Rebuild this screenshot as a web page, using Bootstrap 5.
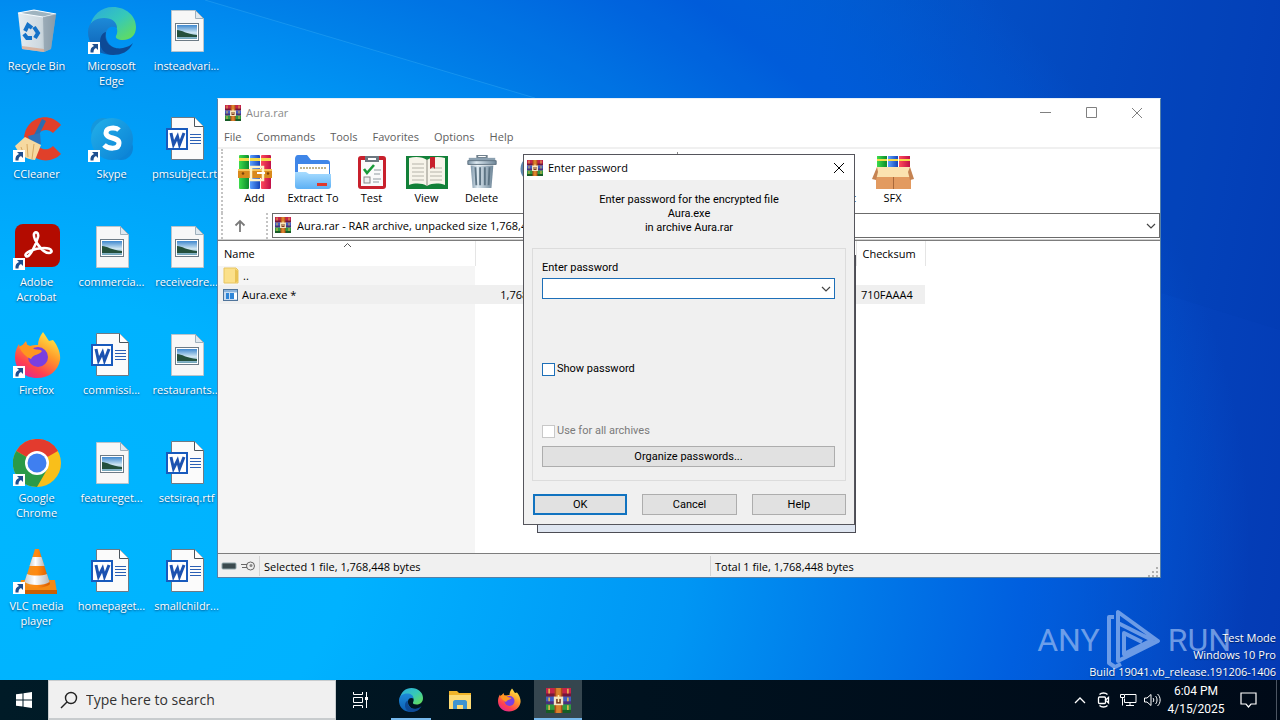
<!DOCTYPE html>
<html lang="en">
<head>
<meta charset="utf-8">
<meta name="viewport" content="width=device-width, initial-scale=1">
<title>Aura.rar</title>
<link rel="stylesheet" href="https://cdn.jsdelivr.net/npm/bootstrap@5.3.0/dist/css/bootstrap.min.css">
<style>
  body { font-family: "Open Sans", "Noto Sans", sans-serif; font-size: 11px; line-height: 15px; color: #000; }
  button, input, select { font: inherit; color: inherit; }
  svg { display: block; flex: none; }
  .desk {
    background:
      radial-gradient(ellipse 1250px 900px at 0% 80%, #00b6ff 0%, #00b2ff 28%, #0096f4 55%, #005fdf 82%, rgba(3,64,190,0) 100%),
      linear-gradient(100deg, #0078d8 40%, #0451c8 70%, #043ab4 100%);
  }
  .beam { inset: 0; width: 100%; height: 100%; }

  /* desktop shortcuts */
  .shortcuts { display: grid; grid-auto-flow: column; grid-template-rows: repeat(6, 108px); grid-auto-columns: 75px; width: max-content; margin-left: -1px; }
  .shortcut { color: #fff; text-decoration: none; text-align: center; padding-top: 7px; text-shadow: 0 1px 2px rgba(0,40,90,.8); white-space: nowrap; }
  .shortcut svg { margin: 0 auto 3px; }
  .shortcut span { display: block; }

  /* archive window */
  .archive { left: 217px; top: 98px; width: 944px; height: 480px; background: #fff; border: 1px solid #5580a8; border-top-color: #e8f0f8; }
  .titlebar { height: 27px; color: #8b8b8b; padding-left: 7px; gap: 5px; }
  .winbtn { width: 46px; height: 27px; background: none; border: 0; padding: 0; display: flex; align-items: center; justify-content: center; color: #808080; }
  .menus { height: 23px; padding-left: 6px; gap: 15px; border-bottom: 2px solid #f0f0f0; }
  .menus a { color: #5e5e5e; text-decoration: none; }
  .grip { border-left: 2px dotted #c4c4c4; width: 2px; align-self: stretch; }
  .tools { height: 64px; padding: 0 0 0 3px; }
  .tool { background: none; border: 0; padding: 6px 0 0; width: 55px; white-space: nowrap; display: flex; flex-direction: column; align-items: center; gap: 1px; }
  .tool.wide { width: 62px; }
  .tool-sep { width: 1px; height: 50px; background: #888; margin: 3px 132px 0 113px; }
  .address { height: 27px; padding-left: 3px; border-bottom: 1px solid #d0d0d0; }
  .address select { appearance: none; flex: 1; height: 25px; border: 1px solid #6b6b6b; border-radius: 0; background: #fff; padding: 0 24px; outline: 0; }
  .address .rar { left: 3px; top: 4px; }
  .address .chev { right: 4px; top: 9px; }
  .upbtn { background: none; border: 0; padding: 0 10px 0 0; width: 43px; display: flex; align-items: center; justify-content: center; }
  .filelist { border-top: 1px solid #7d7d7d; background: linear-gradient(90deg, #f5f5f5 257px, #fff 257px); }
  .filelist table { table-layout: fixed; width: 707px; border-collapse: collapse; }
  .filelist th { height: 25px; background: #fff; font-weight: 400; padding: 0 6px; border-right: 1px solid #e5e5e5; }
  .filelist td { height: 19px; padding: 0 5px; line-height: 19px; white-space: nowrap; }
  .filelist .picked { background: #efefef; }
  .filelist .num { text-align: right; }
  .sorter { left: 125px; top: 1px; }
  .statusbar { height: 24px; background: #f0f0f0; border-top: 1px solid #7d7d7d; padding-left: 3px; }
  .statusbar .cell { border-left: 1px solid #d4d4d4; padding-left: 4px; height: 20px; line-height: 22px; }
  .statusbar .first { width: 451px; }

  /* progress window behind the prompt */
  .progress-back { left: 537px; top: 255px; width: 319px; height: 278px; background: #dfe6f1; border: 1px solid #4c4c54; }

  /* password prompt */
  .prompt { left: 523px; top: 154px; width: 332px; background: #f0f0f0; border: 1px solid #55555c; }
  .prompt-title { height: 25px; background: #fff; padding-left: 3px; gap: 5px; }
  .prompt-title button { width: 30px; height: 25px; color: #000; }
  .prompt-body { padding: 13px 8px 9px; font-family: Roboto, sans-serif; line-height: 14px; }
  .group { border: 1px solid #dcdcdc; padding: 12px 10px 13px 9px; margin-top: 13px; }
  .combo { border: 1px solid #1d6fb8; background: #fff; height: 21px; margin-top: 3px; }
  .combo input { border: 0; outline: 0; background: transparent; min-width: 0; padding: 0 4px; }
  .combo button { border: 0; background: none; padding: 0 3px; }
  .tick { appearance: none; width: 13px; height: 13px; border: 1px solid #1d6fb8; background: #fff; margin: 0; }
  .tick:disabled { border-color: #c8c8c8; }
  .tick + label { padding-left: 2px; }
  .show-row { margin-top: 63px; }
  .all-row { margin-top: 48px; color: #7a7a7a; }
  .flatbtn { background: #e1e1e1; border: 1px solid #adadad; height: 21px; padding: 0; line-height: 17px; }
  .flatbtn.main { border: 2px solid #1173c0; }
  .actions { display: grid; grid-template-columns: repeat(3, 1fr); gap: 15px; margin: 13px 0 0 1px; }

  /* corner texts */
  .corner { right: 4px; bottom: 0; color: #fff; text-align: right; line-height: 17px; text-shadow: 0 1px 1px rgba(0,0,0,.5); }
  .stamp { right: 49px; bottom: 7px; color: rgba(150,185,240,.72); font: 400 32px/66px Roboto, sans-serif; gap: 6px; }

  /* taskbar */
  .taskbar { height: 40px; background: linear-gradient(90deg, #001b27, #00121f 50%, #000a18); color: #fff; }
  .taskbar button { background: none; border: 0; padding: 0; color: #fff; height: 40px; width: 48px; display: flex; align-items: center; justify-content: center; }
  .taskbar .gapless { width: 50px; }
  .taskbar .running { box-shadow: inset 0 -2px #76b9ed; width: 40px; margin: 0 5px 0 7px; }
  .taskbar .current { background: #35464f; box-shadow: inset 0 -2px #76b9ed; }
  .taskbar .tray { width: 24px; }
  .find { width: 288px; background: #f0f0f0; border: 1px solid #c8ccce; border-bottom-width: 2px; padding-left: 11px; gap: 8px; }
  .find input { border: 0; outline: 0; background: transparent; font-size: 14px; line-height: 20px; min-width: 0; padding: 0; }
  .find input::placeholder { color: #333; opacity: 1; }
  .clock { width: 64px; text-align: center; font-family: Roboto, sans-serif; font-size: 12px; line-height: 18px; }
  .edge-line { width: 1px; background: #4c5562; height: 40px; margin-right: 3px; }
</style>
</head>
<body class="vh-100 overflow-hidden d-flex flex-column">

<svg width="0" height="0" class="position-absolute" aria-hidden="true">
  <defs>
    <linearGradient id="gEdgeA" x1="0" y1="0" x2="1" y2="1"><stop offset="0" stop-color="#2aa9df"/><stop offset=".5" stop-color="#36c9b8"/><stop offset="1" stop-color="#6be04c"/></linearGradient>
    <linearGradient id="gEdgeB" x1="0" y1="0" x2="0" y2="1"><stop offset="0" stop-color="#1d8ad8"/><stop offset="1" stop-color="#0c5fb4"/></linearGradient>
    <linearGradient id="gSky" x1="0" y1="0" x2="1" y2="1"><stop offset="0" stop-color="#23b1ea"/><stop offset="1" stop-color="#0a7fd4"/></linearGradient>
    <linearGradient id="gFox" x1=".8" y1="0" x2=".2" y2="1"><stop offset="0" stop-color="#fff04a"/><stop offset=".4" stop-color="#ff9a2a"/><stop offset=".75" stop-color="#ff4050"/><stop offset="1" stop-color="#e0249a"/></linearGradient>
    <linearGradient id="gCone" x1="0" y1="0" x2="1" y2="0"><stop offset="0" stop-color="#f09020"/><stop offset=".5" stop-color="#ff8a10"/><stop offset="1" stop-color="#d85a00"/></linearGradient>
    <linearGradient id="gWhite" x1="0" y1="0" x2="1" y2="0"><stop offset="0" stop-color="#ccc"/><stop offset=".4" stop-color="#fff"/><stop offset="1" stop-color="#b8b8b8"/></linearGradient>
    <linearGradient id="gFold" x1="0" y1="0" x2="0" y2="1"><stop offset="0" stop-color="#a8dcff"/><stop offset="1" stop-color="#5cb0f4"/></linearGradient>
    <linearGradient id="gCan" x1="0" y1="0" x2="1" y2="0"><stop offset="0" stop-color="#7d95a8"/><stop offset=".3" stop-color="#dce8f0"/><stop offset="1" stop-color="#6f8799"/></linearGradient>
    <linearGradient id="gPhoto" x1="0" y1="0" x2="0" y2="1"><stop offset="0" stop-color="#3f88cf"/><stop offset=".55" stop-color="#cfe6f2"/><stop offset="1" stop-color="#6ea3b8"/></linearGradient>
    <linearGradient id="gG" x1="0" x2="1"><stop offset="0" stop-color="#3ddc4c"/><stop offset="1" stop-color="#0c8a2c"/></linearGradient>
    <linearGradient id="gB" x1="0" x2="1"><stop offset="0" stop-color="#5aa0ff"/><stop offset="1" stop-color="#1545b8"/></linearGradient>
    <linearGradient id="gR" x1="0" x2="1"><stop offset="0" stop-color="#ff4a5a"/><stop offset="1" stop-color="#c01048"/></linearGradient>
    <linearGradient id="gBin" x1="0" x2="1"><stop offset="0" stop-color="#e4ecf1"/><stop offset=".6" stop-color="#cdd8df"/><stop offset="1" stop-color="#98a8b4"/></linearGradient>
  </defs>
  <symbol id="s-arrow" viewBox="0 0 48 48"><path d="M0 35h12v12H0z" fill="#fff"/><path d="M4 37h6v6l-2-2c-2 1-2.500 2-2.500 4.500H2.500C2 42 3.500 40 6 39z" fill="#1f4f8f"/></symbol>
  <symbol id="s-bin" viewBox="0 0 48 48"><path d="M5 6 21 3l22 4-5 35-7 3-22-3z" fill="url(#gBin)"/><path d="M5 6 21 3l22 4-13 3z" fill="#9fb4c0" stroke="#f6fbff" stroke-width="1.200"/><path d="m30 10 13-3-5 35-7 3z" fill="#7f93a2" opacity=".6"/><path d="m9 39 22 3v3L9 42z" fill="#d9a183" opacity=".7"/><g fill="none" stroke="#1472c8" stroke-width="4"><path d="m12 24 3-6 4 3"/><path d="m21 20 4 6-3 5"/><path d="M19 31h-5l-3-4"/></g></symbol>
  <symbol id="s-edge" viewBox="0 0 48 48"><path d="M2 20C4 8 13 0 25 0c13 0 23 9 23 20 0 8-5 13-13 13-5 0-8-2-7-4 3-5 1-13-7-14C12 14 5 17 2 20z" fill="url(#gEdgeA)"/><path d="M0 25C0 15 8 11 16 11c8 0 13 4 13 10-6-3-10 0-11 5-1 9 6 16 16 18-6 4-12 4-17 3C7 45 0 36 0 25z" fill="url(#gEdgeB)"/><path d="M18 25c-3 13 9 18 17 16 5-1 8-3 10-5-4 9-12 12-20 12-8 0-13-6-13-13 0-5 2-9 6-10z" fill="#0d4a96"/></symbol>
  <symbol id="s-image" viewBox="0 0 48 48"><path d="M8.500 3.500h24l8 8v33h-32z" fill="#f7f7f7" stroke="#b9c4cc"/><path d="M32.500 3.500v8h8z" fill="#dfe8ef" stroke="#9fb0bc"/><rect x="12.500" y="16.500" width="23" height="17" fill="#fff" stroke="#6d7b86"/><path d="M14 18h20v14H14z" fill="url(#gPhoto)"/><path d="M14 23c5 0 9 4 20 5v2H14z" fill="#24503c"/></symbol>
  <symbol id="s-doc" viewBox="0 0 48 48"><path d="M8.500 2.500h23l9 9v33h-32z" fill="#fbfbfb" stroke="#6f7a84"/><path d="M31.500 2.500v9h9" fill="#fff" stroke="#4a545c"/><path d="M27 19.500h11M27 22.500h11M27 25.500h11M27 28.500h11" stroke="#2b5fb4"/><rect x="4" y="14" width="20" height="20" fill="#fff" stroke="#185abd" stroke-width="2"/><path d="m8 18 2.500 11.500 4-8 2 8L21 18" fill="none" stroke="#1c52b0" stroke-width="3"/></symbol>
  <symbol id="s-cc" viewBox="0 0 48 48"><path d="M48 10 40 18c-7-7-17-1-17 7s10 13 17 6l8 8c-14 14-37 3-37-14C11 3 35-5 48 10z" fill="#e0402a"/><path d="m29 4 4 2-9 18-4-2z" fill="#2b6db0"/><path d="m15 21 12-3 1 11-9 2z" fill="#2f74bc"/><path d="M2 31 12 22l16 8-6 15C12 44 7 40 2 31z" fill="#f6d9a0"/><path d="m8 32 3 8M14 29l1 13M21 29l-2 15" stroke="#d8a860"/></symbol>
  <symbol id="s-skype" viewBox="0 0 48 48"><circle cx="15" cy="15" r="12" fill="#1597dc"/><circle cx="33" cy="33" r="12" fill="#0c84d6"/><circle cx="24" cy="24" r="21" fill="url(#gSky)"/><path d="M31 15c-3-3-13-3-13 3 0 6 13 4 13 10 0 7-11 6-15 2" fill="none" stroke="#fff" stroke-width="5"/></symbol>
  <symbol id="s-pdf" viewBox="0 0 48 48"><rect x="2" y="1" width="45" height="43" rx="8" fill="#b30b00"/><path d="M13 33c-3-3 8-8 18-8 9 0 9 5 5 5C29 30 20 16 21 11c1-3 5-2 4 3-2 8-9 22-12 19z" fill="none" stroke="#fff" stroke-width="2.600"/></symbol>
  <symbol id="s-fox" viewBox="0 0 48 48"><path d="M30 1c3 4 4 6 6 9l4-1c5 6 8 14 7 20-2 11-11 18-23 18C11 47 2 38 2 26c0-6 2-10 4-13l1 4 6-7 2 6c4-2 7-2 10-2 0-5 2-9 5-13z" fill="url(#gFox)"/><circle cx="25" cy="26" r="10" fill="#7a3fe0"/><path d="M6 16c5-4 12-2 15 2 3 1 6 0 8 2-2 4-9 3-11 8-5-2-9-6-12-12z" fill="#ff9620"/></symbol>
  <symbol id="s-chrome" viewBox="0 0 48 48"><circle cx="24" cy="24" r="24" fill="#f9bf1a"/><path d="M24 24 3.200 12A24 24 0 0 1 44.800 12z" fill="#e33b2e"/><path d="M24 0A24 24 0 0 1 44.800 12H24z" fill="#e33b2e"/><path d="M3.200 12A24 24 0 0 0 24 48L34.400 30 24 24z" fill="#2a9a48"/><circle cx="24" cy="24" r="12" fill="#fff"/><circle cx="24" cy="24" r="9.500" fill="#3f7ff0"/></symbol>
  <symbol id="s-vlc" viewBox="0 0 48 48"><path d="m8 33 34 0 2 13H5z" fill="#f58a14"/><path d="M5 43h39v4H5z" fill="#c95f05"/><path d="M22 2h4l11 35c-5 5-21 5-26 0z" fill="url(#gCone)"/><path d="m19.500 10 9 0 3 9h-15z" fill="url(#gWhite)"/><path d="m14 27c5 2 15 2 20 0l2.500 8c-5 4-20 4-25 0z" fill="url(#gWhite)"/></symbol>
  <symbol id="s-rar" viewBox="0 0 32 32"><path d="M0 0h32v11H0z" fill="#c4244a"/><path d="M0 7h32v4H0z" fill="#74183a"/><path d="M0 11h32v10H0z" fill="#3f5fc0"/><path d="M0 17h32v4H0z" fill="#4b2f7c"/><path d="M0 21h32v11H0z" fill="#2f9a40"/><path d="M0 28h32v4H0z" fill="#175c26"/><path d="M3 1h2v6H3zM3 12h2v5H3zM3 22h2v6H3zM27 1h2v6h-2zM27 12h2v5h-2zM27 22h2v6h-2z" fill="#e9b84c"/><path d="M11 0h10v32H11z" fill="#b04a18"/><path d="M13 0h6v32h-6z" fill="#d9822c"/><path d="M10 11h12v11H10z" fill="#f3e4c4"/><path d="M13 14h6v6h-6z" fill="#7c3a20"/><path d="M15 9h2v9h-2z" fill="#ffe9a8"/></symbol>
  <symbol id="s-add" viewBox="0 0 34 34"><rect width="10" height="34" x="1" fill="url(#gG)" rx="1"/><rect x="12" width="10" height="34" fill="url(#gB)" rx="1"/><rect x="23" width="10" height="34" fill="url(#gR)" rx="1"/><path d="M1 3h10v3H1zM12 3h10v3H12zM23 3h10v3H23z" fill="#f6dc4a"/><path d="M0 14h34v9H0z" fill="#d98a1c"/><path d="M0 14h34v2H0z" fill="#f7c65a"/><rect x="13" y="12" width="12" height="13" fill="none" stroke="#fff3c8" stroke-width="2.500"/><path d="M19 18h8" stroke="#fff" stroke-width="2"/><circle cx="5" cy="18.500" r="1.300" fill="#7c4308"/><circle cx="30" cy="18.500" r="1.300" fill="#7c4308"/></symbol>
  <symbol id="s-extract" viewBox="0 0 38 34"><path d="M1 4c0-2 1-4 3-4h9l4 5h16c2 0 3 1 3 3v20H1z" fill="#3f86e8"/><path d="M4 9h31v12H4z" fill="#fff"/><path d="M6 13h27" stroke="#c0b48a" stroke-width="2" stroke-dasharray="2 1"/><path d="M1 17h11l3 2h22v12c0 2-1 3-3 3H4c-2 0-3-1-3-3z" fill="url(#gFold)"/><path d="M23 28h10v3H23z" fill="#e0382c"/></symbol>
  <symbol id="s-test" viewBox="0 0 30 34"><rect x="1" y="1" width="28" height="33" rx="3" fill="#c8202c"/><path d="M4 5h22v26H4z" fill="#fafafa"/><path d="M8 1h14v6H8z" fill="#6c7880"/><path d="M11 3h8v2h-8z" fill="#fff"/><path d="m7 14 3 4 7-8" fill="none" stroke="#189a38" stroke-width="2.600"/><path d="M17 15h7M17 19h6M16 24h8M16 27h6" stroke="#909aa0"/><rect x="7" y="22" width="6" height="6" fill="#eee" stroke="#8a8a8a"/></symbol>
  <symbol id="s-view" viewBox="0 0 42 34"><path d="M0 1h42v33H0z" fill="#128038"/><path d="M3 3c7-2 14-1 18 2v26c-5-3-12-3-18-1zM39 3c-7-2-14-1-18 2v26c5-3 12-3 18-1z" fill="#f7f4ea"/><path d="M6 9h12M6 13h12M6 17h12M6 21h12M6 25h12M24 13h12M24 17h12M24 21h12M24 25h12" stroke="#b6b4aa"/><path d="M21 5v26" stroke="#8c8a80"/><path d="M24 2h5v12l-2-2-3 2z" fill="#c8202c"/></symbol>
  <symbol id="s-delete" viewBox="0 0 30 36"><path d="M10 0h10v3H10z" fill="none" stroke="#70808c" stroke-width="2"/><path d="M1 3h28v4H1z" fill="#8ba0b0"/><path d="M0 6h30v4H0z" fill="url(#gCan)" stroke="#60727f"/><path d="M3 11h24l-2 24H5z" fill="url(#gCan)"/><path d="m8 13 1 19M13 13v19M18 13v19M23 13l-1 19" stroke="#5d7484" stroke-width="2"/></symbol>
  <symbol id="s-glass" viewBox="0 0 34 34"><circle cx="14" cy="14" r="12" fill="#b8dcf8" stroke="#5f87ae" stroke-width="3"/><path d="m23 23 9 9" stroke="#5f87ae" stroke-width="5"/></symbol>
  <symbol id="s-note" viewBox="0 0 34 34"><circle cx="17" cy="17" r="17" fill="#c8d4e0"/><path d="M9 11h16M9 17h16M9 23h10" stroke="#fff" stroke-width="2"/></symbol>
  <symbol id="s-sfx" viewBox="0 0 42 34"><path d="M5 1h10v12H5z" fill="url(#gG)"/><path d="M16 1h10v12H16z" fill="url(#gB)"/><path d="M27 1h11v12H27z" fill="url(#gR)"/><path d="M5 4h10v2H5zM16 4h10v2H16zM27 4h11v2H27z" fill="#f6dc4a"/><path d="M4 20h35v14H4z" fill="#e29a60"/><path d="M21 20h1v14h-1z" fill="#a8683a"/><path d="M5 12h33l2 10H2z" fill="#fbe2b0"/><path d="M5 12 0 24l4 1 2-8zM38 12l4 12-4 1-2-8z" fill="#c58352"/></symbol>
  <symbol id="s-x" viewBox="0 0 12 12"><path d="m1 1 10 10M11 1 1 11" stroke="currentColor" fill="none"/></symbol>
  <symbol id="s-chev" viewBox="0 0 10 8"><path d="m1 2 4 4 4-4" stroke="#444" fill="none" stroke-width="1.200"/></symbol>
</svg>

<main class="desk flex-grow-1 position-relative overflow-hidden">
  <svg class="beam position-absolute" viewBox="0 0 1280 680" preserveAspectRatio="none" aria-hidden="true">
    <path d="M205 0 535 98 1280 330V0z" fill="#0038a0" opacity=".06"/><path d="m205 0 330 98" stroke="#3db4f8" opacity=".35"/>
  </svg>

  <nav class="shortcuts position-relative" aria-label="Desktop">
    <a class="shortcut" href="#"><svg width="48" height="48"><use href="#s-bin"/></svg><span>Recycle Bin</span></a>
    <a class="shortcut" href="#"><svg width="48" height="48"><use href="#s-cc"/><use href="#s-arrow"/></svg><span>CCleaner</span></a>
    <a class="shortcut" href="#"><svg width="48" height="48"><use href="#s-pdf"/><use href="#s-arrow"/></svg><span>Adobe</span><span>Acrobat</span></a>
    <a class="shortcut" href="#"><svg width="48" height="48"><use href="#s-fox"/><use href="#s-arrow"/></svg><span>Firefox</span></a>
    <a class="shortcut" href="#"><svg width="48" height="48"><use href="#s-chrome"/><use href="#s-arrow"/></svg><span>Google</span><span>Chrome</span></a>
    <a class="shortcut" href="#"><svg width="48" height="48"><use href="#s-vlc"/><use href="#s-arrow"/></svg><span>VLC media</span><span>player</span></a>
    <a class="shortcut" href="#"><svg width="48" height="48"><use href="#s-edge"/><use href="#s-arrow"/></svg><span>Microsoft</span><span>Edge</span></a>
    <a class="shortcut" href="#"><svg width="48" height="48"><use href="#s-skype"/><use href="#s-arrow"/></svg><span>Skype</span></a>
    <a class="shortcut" href="#"><svg width="48" height="48"><use href="#s-image"/></svg><span>commercia...</span></a>
    <a class="shortcut" href="#"><svg width="48" height="48"><use href="#s-doc"/></svg><span>commissi...</span></a>
    <a class="shortcut" href="#"><svg width="48" height="48"><use href="#s-image"/></svg><span>featureget...</span></a>
    <a class="shortcut" href="#"><svg width="48" height="48"><use href="#s-doc"/></svg><span>homepaget...</span></a>
    <a class="shortcut" href="#"><svg width="48" height="48"><use href="#s-image"/></svg><span>insteadvari...</span></a>
    <a class="shortcut" href="#"><svg width="48" height="48"><use href="#s-doc"/></svg><span>pmsubject.rtf</span></a>
    <a class="shortcut" href="#"><svg width="48" height="48"><use href="#s-image"/></svg><span>receivedre...</span></a>
    <a class="shortcut" href="#"><svg width="48" height="48"><use href="#s-image"/></svg><span>restaurants...</span></a>
    <a class="shortcut" href="#"><svg width="48" height="48"><use href="#s-doc"/></svg><span>setsiraq.rtf</span></a>
    <a class="shortcut" href="#"><svg width="48" height="48"><use href="#s-doc"/></svg><span>smallchildr...</span></a>
  </nav>

  <div class="stamp position-absolute d-flex align-items-center" aria-hidden="true">
    <span>ANY</span>
    <svg width="56" height="62" viewBox="0 0 56 62" fill="none" stroke="currentColor" stroke-width="4" stroke-linejoin="round"><path d="M8 8H3v46l6 4 6-3"/><path d="M12 14v38l40-20L12 3v11l34 17-28 14V24l18 9"/></svg>
    <span>RUN</span>
  </div>
  <div class="corner position-absolute"><div>Test Mode</div><div>Windows 10 Pro</div><div>Build 19041.vb_release.191206-1406</div></div>

  <section class="archive position-absolute d-flex flex-column" aria-label="Aura.rar">
    <header class="titlebar d-flex align-items-center">
      <svg width="16" height="16"><use href="#s-rar"/></svg><span class="me-auto">Aura.rar</span>
      <div class="d-flex">
        <button class="winbtn" aria-label="Minimize"><svg width="11" height="11"><path d="M0 5.500h11" stroke="currentColor"/></svg></button>
        <button class="winbtn" aria-label="Maximize"><svg width="11" height="11"><path d="M.5.500h10v10H.5z" stroke="currentColor" fill="none"/></svg></button>
        <button class="winbtn" aria-label="Close"><svg width="12" height="12"><use href="#s-x"/></svg></button>
      </div>
    </header>
    <nav class="menus d-flex align-items-center"><a href="#">File</a><a href="#">Commands</a><a href="#">Tools</a><a href="#">Favorites</a><a href="#">Options</a><a href="#">Help</a></nav>
    <div class="tools d-flex align-items-start">
      <span class="grip me-1"></span>
      <button class="tool"><svg width="34" height="34"><use href="#s-add"/></svg>Add</button>
      <button class="tool wide"><svg width="38" height="34"><use href="#s-extract"/></svg>Extract To</button>
      <button class="tool"><svg width="30" height="34"><use href="#s-test"/></svg>Test</button>
      <button class="tool"><svg width="42" height="34"><use href="#s-view"/></svg>View</button>
      <button class="tool"><svg width="30" height="34"><use href="#s-delete"/></svg>Delete</button>
      <button class="tool"><svg width="34" height="34"><use href="#s-glass"/></svg>Find</button>
      <span class="tool-sep"></span>
      <button class="tool"><svg width="34" height="34"><use href="#s-note"/></svg>Protect</button>
      <button class="tool"><svg width="42" height="34"><use href="#s-sfx"/></svg>SFX</button>
    </div>
    <div class="address d-flex align-items-start position-relative">
      <span class="grip"></span>
      <button class="upbtn h-100" aria-label="Up one level"><svg width="12" height="14"><path d="M6 13V2M1.500 6.500 6 2l4.500 4.500" stroke="#7a7a7a" stroke-width="1.800" fill="none"/></svg></button>
      <span class="grip me-1"></span>
      <div class="flex-grow-1 d-flex position-relative">
        <select aria-label="Archive path"><option>Aura.rar - RAR archive, unpacked size 1,768,448 bytes</option></select>
        <svg class="rar position-absolute" width="16" height="16"><use href="#s-rar"/></svg>
        <svg class="chev position-absolute" width="10" height="8"><use href="#s-chev"/></svg>
      </div>
    </div>
    <div class="filelist flex-grow-1 position-relative">
      <table>
        <colgroup><col style="width:257px"><col style="width:80px"><col style="width:301px"><col style="width:69px"></colgroup>
        <thead><tr><th scope="col">Name</th><th scope="col" class="num">Size</th><th scope="col">Type</th><th scope="col">Checksum</th></tr></thead>
        <tbody>
          <tr><td><span class="d-flex align-items-center gap-1"><svg width="16" height="17"><path d="M1 1h12l2 2v13H1z" fill="#fbe08a" stroke="#e8c560"/><path d="M12 2v14l3-2V4z" fill="#e9c355"/></svg>..</span></td><td></td><td></td><td></td></tr>
          <tr class="picked"><td><span class="d-flex align-items-center gap-1"><svg width="15" height="13"><rect x=".5" y="1.500" width="14" height="11" fill="#c9dcf0" stroke="#50749a"/><path d="M1 2h13v2H1z" fill="#8cb4dc"/><path d="M3 5h3v6H3zM7 5h4v6H7z" fill="#2f86d8"/><path d="M11 5h3v6h-3z" fill="#fff"/></svg>Aura.exe *</span></td><td class="num">1,768,448</td><td></td><td>710FAAA4</td></tr>
        </tbody>
      </table>
      <svg class="sorter position-absolute" width="9" height="6"><path d="m1 5 3.500-3.500L8 5" stroke="#555" fill="none"/></svg>
    </div>
    <footer class="statusbar d-flex align-items-center">
      <svg width="16" height="12"><rect x="1" y="3" width="14" height="6" rx="1" fill="#3b4a4e" stroke="#8fa3a8"/></svg>
      <svg class="mx-1" width="14" height="12"><circle cx="9.500" cy="6" r="4" fill="#eee" stroke="#666"/><circle cx="10" cy="5.500" r="1.500" fill="#888"/><path d="M6 4.500H0M6 7.500H1" stroke="#666"/></svg>
      <span class="cell first">Selected 1 file, 1,768,448 bytes</span>
      <span class="cell">Total 1 file, 1,768,448 bytes</span>
      <svg class="ms-auto align-self-end" width="12" height="12"><path d="M9 2v2M9 6v2M5 6v2M9 10v2M5 10v2M1 10v2" stroke="#b0b0b0" stroke-width="2"/></svg>
    </footer>
  </section>

  <div class="progress-back position-absolute"></div>

  <form class="prompt position-absolute" role="dialog" aria-labelledby="promptTitle" onsubmit="return false">
    <header class="prompt-title d-flex align-items-center">
      <svg width="16" height="16"><use href="#s-rar"/></svg><span id="promptTitle" class="me-auto">Enter password</span>
      <button type="button" class="winbtn" aria-label="Close"><svg width="12" height="12"><use href="#s-x"/></svg></button>
    </header>
    <div class="prompt-body">
      <div class="text-center"><div>Enter password for the encrypted file</div><div>Aura.exe</div><div>in archive Aura.rar</div></div>
      <div class="group">
        <label class="d-block" for="pw">Enter password</label>
        <div class="combo d-flex align-items-stretch"><input id="pw" type="text" class="flex-grow-1"><button type="button" aria-label="Recent passwords"><svg width="10" height="8"><use href="#s-chev"/></svg></button></div>
        <div class="show-row d-flex align-items-center"><input class="tick" type="checkbox" id="show"><label for="show">Show password</label></div>
        <div class="all-row d-flex align-items-center"><input class="tick" type="checkbox" id="all" disabled><label for="all">Use for all archives</label></div>
        <button type="button" class="flatbtn w-100 mt-2 d-block">Organize passwords...</button>
      </div>
      <div class="actions"><button class="flatbtn main">OK</button><button type="button" class="flatbtn">Cancel</button><button type="button" class="flatbtn">Help</button></div>
    </div>
  </form>
</main>

<footer class="taskbar d-flex">
  <button aria-label="Start"><svg width="16" height="16"><path d="m0 2.300 6.500-.9v6H0zM7.500 1.300 16 0v7.400H7.500zM0 8.400h6.500v6.200L0 13.700zM7.500 8.400H16V16l-8.500-1.200z" fill="#fff"/></svg></button>
  <label class="find d-flex align-items-center"><svg width="18" height="18" fill="none" stroke="#222" stroke-width="1.400"><circle cx="11" cy="7" r="5.500"/><path d="m7 11-6 6"/></svg><input type="text" class="flex-grow-1" placeholder="Type here to search" aria-label="Search"></label>
  <button aria-label="Task view"><svg width="17" height="16" fill="none" stroke="#fff"><path d="M1.500 0v2.500h9V0M1.500 16v-2.500h9V16M1.500 5.500h9v5h-9zM14.500 0v16"/><path d="M13 5h3v3h-3z" fill="#fff" stroke="none"/></svg></button>
  <button class="running" aria-label="Microsoft Edge"><svg width="24" height="24"><use href="#s-edge"/></svg></button>
  <button aria-label="File Explorer"><svg width="22" height="20"><path d="M0 1h8l2 2h12v16H0z" fill="#f0b429"/><path d="M0 5h22v14H0z" fill="#fddb75"/><path d="M4 19v-7c0-1 1-2 2-2h10c1 0 2 1 2 2v7h-4v-4H8v4z" fill="#3f94d0"/></svg></button>
  <button class="gapless" aria-label="Firefox"><svg width="24" height="24"><use href="#s-fox"/></svg></button>
  <button class="current" aria-label="WinRAR"><svg width="25" height="25"><use href="#s-rar"/></svg></button>
  <div class="ms-auto d-flex align-items-center">
    <button class="tray" aria-label="Show hidden icons"><svg width="12" height="8" fill="none" stroke="#fff" stroke-width="1.300"><path d="m1 7 5-5 5 5"/></svg></button>
    <button class="tray" aria-label="Meet now"><svg width="14" height="16" fill="none" stroke="#fff" stroke-width="1.300"><rect x="1.500" y="5" width="7" height="6.500" rx="1"/><path d="m8.500 8 3-2.500v5.500zM2.500 2.500c2-2 6-2 8 0M2.500 13.500c2 2 6 2 8 0"/></svg></button>
    <button class="tray" aria-label="Network"><svg width="17" height="14" fill="none" stroke="#fff"><path d="M5 1.500h11v8H4.500v-4M10 9.500v3M6 12.500h8M.5 1.500h4v3h-4zM2.500 4.500v8"/></svg></button>
    <button class="tray" aria-label="Volume"><svg width="17" height="14" fill="none" stroke="#fff"><path d="M.5 5h2.500l4-3.500v11L3 9H.5zM9 5c1 1 1 3 0 4M11.500 3c2 2 2 6 0 8M13.500 1c3.500 3 3.500 9 0 12"/></svg></button>
    <div class="clock">6:04 PM<br>4/15/2025</div>
    <button class="tray ms-2 me-3" aria-label="Notifications"><svg width="17" height="16" fill="none" stroke="#fff" stroke-width="1.200"><path d="M1 1h15v11h-5l-2.500 3L6 12H1z"/></svg></button>
    <span class="edge-line"></span>
  </div>
</footer>

<script src="https://cdn.jsdelivr.net/npm/bootstrap@5.3.0/dist/js/bootstrap.bundle.min.js"></script>
</body>
</html>
